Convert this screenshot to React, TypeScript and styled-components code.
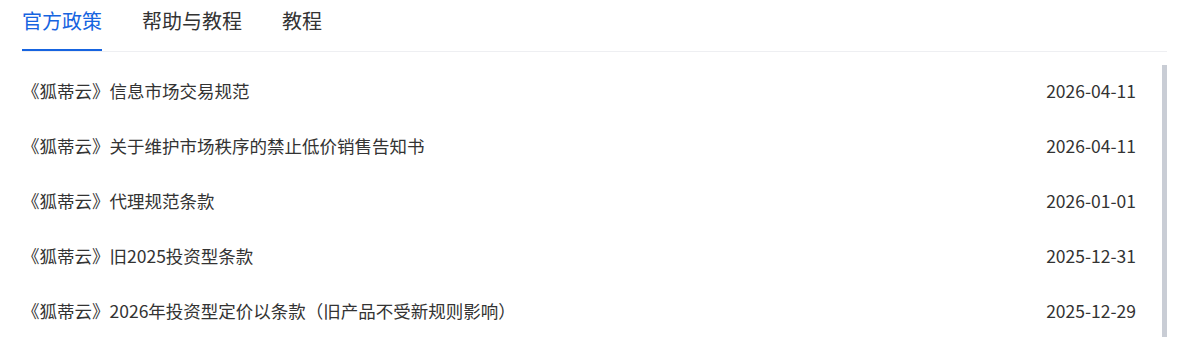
import * as React from 'react';
import styled, { createGlobalStyle } from 'styled-components';

const GlobalStyle = createGlobalStyle`
    body {
        margin: 0;
        background: #ffffff;
        font-family: "Noto Sans CJK SC", "Noto Sans", sans-serif;
        color: #333333;
    }
`;

const Page = styled.div`
    padding: 0 26px 0 22px;
`;

const TabBar = styled.div`
    display: flex;
    gap: 40px;
    border-bottom: 1px solid #eeeff2;
`;

const Tab = styled.div<{ $active?: boolean }>`
    box-sizing: border-box;
    height: 51px;
    line-height: 42px;
    font-size: 20px;
    color: ${(p) => (p.$active ? '#1664e0' : '#333333')};
    border-bottom: 2px solid ${(p) => (p.$active ? '#1664e0' : 'transparent')};
    cursor: pointer;
`;

const ListArea = styled.div`
    position: relative;
    margin-top: 13px;
    height: 300px;
    overflow: hidden;
`;

/* custom scrollbar thumb, drawn over the list edge */
const ScrollThumb = styled.div`
    position: absolute;
    top: 0;
    right: 0;
    width: 5px;
    height: 285px;
    background: #c9cdd5;
`;

const List = styled.ul`
    list-style: none;
    margin: 0;
    padding: 0;
`;

const Row = styled.li`
    display: flex;
    align-items: center;
    justify-content: space-between;
    height: 55px;
    padding: 0 31px 0 0;
    font-size: 17.5px;
    cursor: pointer;
`;

const Title = styled.span`
    color: #333333;
    margin-top: -4px;
`;

const Date = styled.span`
    color: #333333;
    margin-top: -4px;
`;

const tabs = ['官方政策', '帮助与教程', '教程'];

const items = [
    { title: '《狐蒂云》信息市场交易规范', date: '2026-04-11' },
    { title: '《狐蒂云》关于维护市场秩序的禁止低价销售告知书', date: '2026-04-11' },
    { title: '《狐蒂云》代理规范条款', date: '2026-01-01' },
    { title: '《狐蒂云》旧2025投资型条款', date: '2025-12-31' },
    { title: '《狐蒂云》2026年投资型定价以条款（旧产品不受新规则影响）', date: '2025-12-29' },
];

const App = () => {
    return (
        <Page>
            <GlobalStyle />
            <TabBar>
                {tabs.map((t, i) => (
                    <Tab key={t} $active={i === 0}>{t}</Tab>
                ))}
            </TabBar>
            <ListArea>
                <List>
                    {items.map((it) => (
                        <Row key={it.title}>
                            <Title>{it.title}</Title>
                            <Date>{it.date}</Date>
                        </Row>
                    ))}
                </List>
                <ScrollThumb />
            </ListArea>
        </Page>
    );
};

export default App;
